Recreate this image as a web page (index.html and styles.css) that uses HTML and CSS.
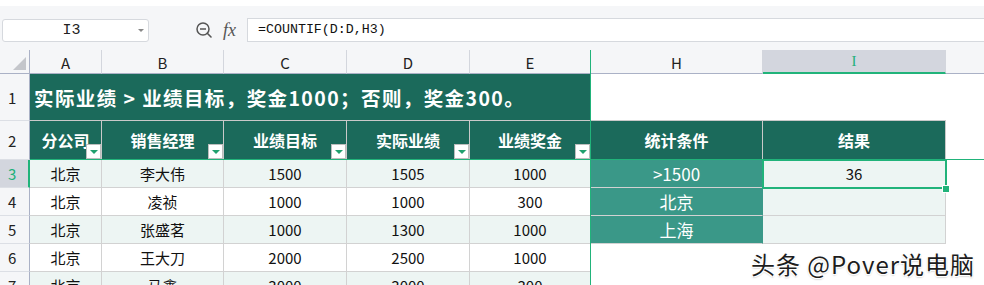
FILE: index.html
```html
<!DOCTYPE html>
<html lang="zh">
<head>
    <meta charset="UTF-8">
    <title>COUNTIF</title>
    <link rel="stylesheet" href="styles.css">
</head>
<body>

    <div class="topstrip"></div>

    <div class="fbar">
        <div class="namebox"><span>I3</span><i class="caret"></i></div>
        <div class="tools">
            <svg class="zoom" width="17" height="16" viewBox="0 0 17 16">
                <circle cx="7" cy="7" r="6" fill="none" stroke="#555" stroke-width="1.5"/>
                <line x1="4" y1="7" x2="10" y2="7" stroke="#555" stroke-width="1.5"/>
                <line x1="11.3" y1="11.3" x2="15" y2="15" stroke="#555" stroke-width="1.6" stroke-linecap="round"/>
            </svg>
            <span class="fx">fx</span>
        </div>
        <div class="finput">=COUNTIF(D:D,H3)</div>
    </div>

    <div class="sheet">
        <div class="grid">
            <!-- column header -->
            <div class="hd corner"><i class="tri"></i></div>
            <div class="hd">A</div>
            <div class="hd">B</div>
            <div class="hd">C</div>
            <div class="hd">D</div>
            <div class="hd">E</div>
            <div class="hd">H</div>
            <div class="hd on">I</div>
            <div class="hd last"></div>

            <!-- row 1 -->
            <div class="rh">1</div>
            <div class="c title">实际业绩 &gt; 业绩目标，奖金1000；否则，奖金300。</div>
            <div class="c blank under"></div>
            <div class="c blank under"></div>
            <div class="c blank"></div>

            <!-- row 2 -->
            <div class="rh">2</div>
            <div class="c th">分公司<i class="flt"></i></div>
            <div class="c th">销售经理<i class="flt"></i></div>
            <div class="c th">业绩目标<i class="flt"></i></div>
            <div class="c th">实际业绩<i class="flt"></i></div>
            <div class="c th">业绩奖金<i class="flt"></i></div>
            <div class="c th">统计条件</div>
            <div class="c th">结果</div>
            <div class="c blank"></div>

            <!-- row 3 -->
            <div class="rh on">3</div>
            <div class="c alt">北京</div>
            <div class="c alt">李大伟</div>
            <div class="c alt">1500</div>
            <div class="c alt">1505</div>
            <div class="c alt">1000</div>
            <div class="c cond">&gt;1500</div>
            <div class="c alt">36</div>
            <div class="c blank"></div>

            <!-- row 4 -->
            <div class="rh">4</div>
            <div class="c">北京</div>
            <div class="c">凌祯</div>
            <div class="c">1000</div>
            <div class="c">1000</div>
            <div class="c">300</div>
            <div class="c cond">北京</div>
            <div class="c alt"></div>
            <div class="c blank"></div>

            <!-- row 5 -->
            <div class="rh">5</div>
            <div class="c alt">北京</div>
            <div class="c alt">张盛茗</div>
            <div class="c alt">1000</div>
            <div class="c alt">1300</div>
            <div class="c alt">1000</div>
            <div class="c cond">上海</div>
            <div class="c alt"></div>
            <div class="c blank"></div>

            <!-- row 6 -->
            <div class="rh">6</div>
            <div class="c">北京</div>
            <div class="c">王大刀</div>
            <div class="c">2000</div>
            <div class="c">2500</div>
            <div class="c">1000</div>
            <div class="c blank"></div>
            <div class="c blank"></div>
            <div class="c blank"></div>

            <!-- row 7 -->
            <div class="rh">7</div>
            <div class="c alt">北京</div>
            <div class="c alt">马鑫</div>
            <div class="c alt">3000</div>
            <div class="c alt">3000</div>
            <div class="c alt">300</div>
            <div class="c blank"></div>
            <div class="c blank"></div>
            <div class="c blank"></div>
        </div>

        <div class="freeze-v"></div>
        <div class="freeze-h"></div>
        <div class="sel"></div>
        <div class="handle"></div>
        <div class="mark">头条 @Pover说电脑</div>
    </div>

</body>
</html>
```

FILE: styles.css
```css
html, body {
    margin: 0;
    padding: 0;
    overflow: hidden;
}

body {
    width: 984px;
    height: 285px;
    background: #fff;
    font-family: "Noto Sans CJK SC", "Noto Sans", sans-serif;
    color: #1a1a1a;
}

.topstrip {
    height: 6px;
    background: #fff;
}

/* formula bar */
.fbar {
    height: 44px;
    background: #f5f6f8;
    display: flex;
    align-items: flex-start;
    padding-top: 12px;
    box-sizing: border-box;
}

.namebox {
    margin-left: 2px;
    margin-top: 1px;
    width: 147px;
    height: 23px;
    box-sizing: border-box;
    background: #fff;
    border: 1px solid #d6d9de;
    border-radius: 3px;
    position: relative;
    font-family: "Liberation Mono", monospace;
    font-size: 15px;
    line-height: 21px;
    text-align: center;
    color: #222;
}

.namebox span {
    margin-right: 8px;
}

.caret {
    position: absolute;
    right: 4px;
    top: 9px;
    border-left: 3px solid transparent;
    border-right: 3px solid transparent;
    border-top: 3px solid #888;
}

.tools {
    width: 98px;
    height: 24px;
    box-sizing: border-box;
    padding-left: 47px;
    display: flex;
    align-items: center;
    gap: 10px;
}

.zoom {
    display: block;
}

.fx {
    font-family: "Liberation Serif", serif;
    font-style: italic;
    font-size: 18px;
    color: #555;
    line-height: 24px;
}

.finput {
    flex: 1;
    height: 24px;
    box-sizing: border-box;
    background: #fff;
    border: 1px solid #d6d9de;
    border-right: 0;
    padding-left: 10px;
    font-family: "Liberation Mono", monospace;
    font-size: 13.3px;
    line-height: 22px;
    color: #111;
}

/* sheet */
.sheet {
    position: relative;
}

.grid {
    display: grid;
    grid-template-columns: 30px 72px 122px 123px 123px 121px 172px 183px 38px;
    grid-template-rows: 24px 47px 39px 28px 28px 28px 28px 28px;
}

.grid > div {
    box-sizing: border-box;
}

.hd {
    background: #f5f6f8;
    border-right: 1px solid #d3d6dd;
    border-bottom: 1px solid #aab1c6;
    display: flex;
    align-items: center;
    justify-content: center;
    font-size: 15px;
    color: #222;
    padding-top: 1px;
}

.hd.on {
    background: #d3d6de;
    color: #21b07a;
    border-bottom: 2px solid #21b37a;
    font-family: "Liberation Serif", serif;
}

.hd.last {
    border-right: 0;
}

.corner {
    position: relative;
    border-right-color: #aab1c6;
}

.tri {
    position: absolute;
    right: 3px;
    bottom: 3px;
    border-left: 13px solid transparent;
    border-bottom: 13px solid #c4c6cb;
}

.rh {
    background: #f5f6f8;
    border-right: 1px solid #aab1c6;
    border-bottom: 1px solid #dcdfe5;
    display: flex;
    align-items: center;
    padding-left: 8px;
    font-size: 15px;
    color: #222;
}

.rh.on {
    background: #d3d6de;
    color: #21b07a;
    border-right: 2px solid #21b37a;
}

.c {
    border-right: 1px solid #d2d2d2;
    border-bottom: 1px solid #d2d2d2;
    display: flex;
    align-items: center;
    justify-content: center;
    font-size: 15px;
    color: #111;
    background: #fff;
}

.alt {
    background: #edf5f3;
}

.title {
    grid-column: span 5;
    background: #1b6a5b;
    color: #fff;
    font-size: 19.5px;
    font-weight: bold;
    letter-spacing: 1.4px;
    justify-content: flex-start;
    padding-left: 4px;
    white-space: pre;
    border-right: 0;
    border-bottom-color: #c9c9c9;
}

.th {
    position: relative;
    background: #1b6a5b;
    color: #fff;
    font-size: 16px;
    font-weight: bold;
    border-right-color: #c9c9c9;
    border-bottom-color: #1b6a5b;
}

.flt {
    position: absolute;
    right: 0;
    bottom: 0;
    width: 15px;
    height: 15px;
    box-sizing: border-box;
    background: #fff;
    border: 1px solid #bdbdbd;
}

.flt::after {
    content: "";
    position: absolute;
    left: 3px;
    top: 5px;
    border-left: 4px solid transparent;
    border-right: 4px solid transparent;
    border-top: 4px solid #21a06e;
}

.cond {
    background: #3a9888;
    color: #fff;
    font-size: 17px;
    border-right-color: #3a9888;
}

.blank {
    border-right: 0;
    border-bottom: 0;
}

.blank.under {
    border-bottom: 1px solid #c9c9c9;
}

/* overlays */
.freeze-v {
    position: absolute;
    left: 590px;
    top: 0;
    width: 1px;
    height: 240px;
    background: #21b37a;
}

.freeze-h {
    position: absolute;
    left: 30px;
    right: 0;
    top: 109px;
    height: 1px;
    background: #21b37a;
}

.sel {
    position: absolute;
    left: 762px;
    top: 109px;
    width: 185px;
    height: 30px;
    box-sizing: border-box;
    border: 2px solid #21b37a;
}

.handle {
    position: absolute;
    left: 942px;
    top: 135px;
    width: 8px;
    height: 8px;
    box-sizing: border-box;
    background: #21b37a;
    border: 1px solid #fff;
}

.mark {
    position: absolute;
    right: 9px;
    top: 196px;
    font-size: 24px;
    letter-spacing: 1px;
    color: #1d1d1d;
    text-shadow: 1px 1px 0 #fff, -1px -1px 0 #fff, 1px -1px 0 #fff, -1px 1px 0 #fff, 0 1px 2px #888;
}
```
